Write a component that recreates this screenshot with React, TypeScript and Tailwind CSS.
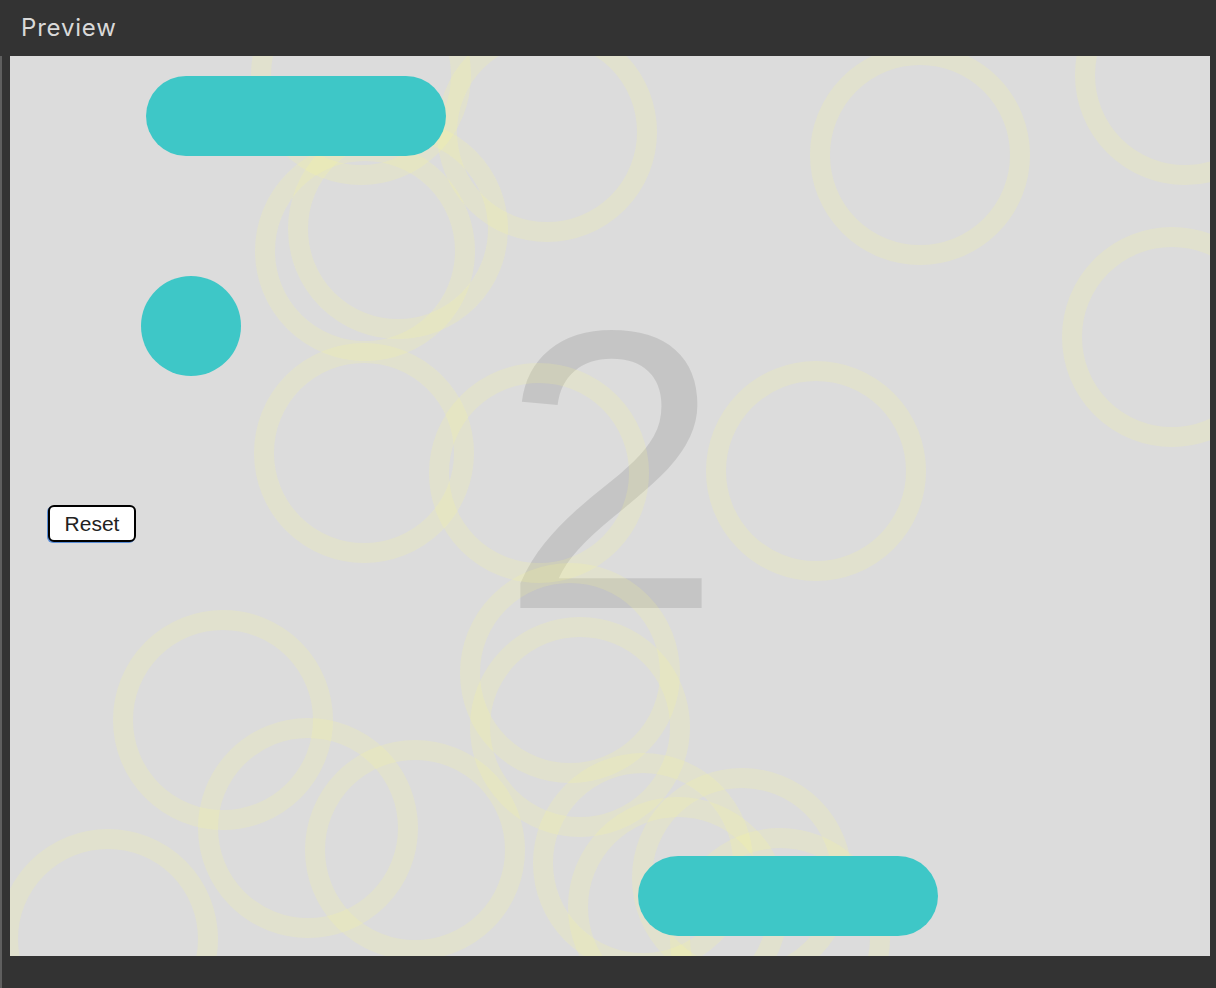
import React from 'react'

// rings on the game canvas, in canvas coordinates (canvas is 1200x900)
const rings: [number, number][] = [
  [910, 99],
  [1175, 19],
  [1162, 281],
  [537, 76],
  [351, 19],
  [388, 173],
  [355, 195],
  [354, 397],
  [529, 417],
  [806, 415],
  [213, 664],
  [298, 772],
  [405, 794],
  [560, 617],
  [570, 671],
  [633, 807],
  [732, 822],
  [668, 851],
  [770, 882],
  [98, 883],
]

function Rings() {
  return (
    <svg className="absolute inset-0" width={1200} height={900} viewBox="0 0 1200 900">
      {rings.map(([cx, cy], i) => (
        <circle
          key={i}
          cx={cx}
          cy={cy}
          r={100}
          fill="none"
          stroke="#ffff88"
          strokeOpacity={0.16}
          strokeWidth={20}
        />
      ))}
    </svg>
  )
}

export default function App() {
  return (
    <div className="flex h-[988px] w-[1216px] flex-col overflow-hidden bg-[#333333]">
      <div className="flex h-14 shrink-0 items-center pl-[21px]">
        <span
          className="text-[24px] leading-none tracking-[0.8px] text-[#d9d9d9]"
          style={{ fontFamily: 'Inter, "Noto Sans", sans-serif' }}
        >
          Preview
        </span>
      </div>
      <div className="flex flex-1">
        <div className="w-[2px] bg-[#5f5f5f]" />
        <div className="ml-[8px] flex flex-col">
          <div className="relative h-[900px] w-[1200px] overflow-hidden bg-[#dcdcdc]">
            <div
              className="absolute left-0 right-0 top-[215px] pl-[2px] text-center text-[398px] leading-none text-black/10"
              style={{ fontFamily: '"Liberation Sans", Arial, sans-serif' }}
            >
              2
            </div>
            <Rings />
            <div className="absolute left-[136px] top-[20px] h-20 w-[300px] rounded-full bg-[#3ec7c7]" />
            <div className="absolute left-[628px] top-[800px] h-20 w-[300px] rounded-full bg-[#3ec7c7]" />
            <div className="absolute left-[131px] top-[220px] h-[100px] w-[100px] rounded-full bg-[#3ec7c7]" />
            <button
              className="absolute left-[38px] top-[449px] flex h-[37px] w-[88px] items-center justify-center rounded-md border-2 border-black bg-white text-[21px] text-[#222] shadow-[-1px_1px_0_0_#5b8fd9]"
              style={{ fontFamily: '"Liberation Sans", Arial, sans-serif' }}
            >
              Reset
            </button>
          </div>
        </div>
      </div>
    </div>
  )
}
